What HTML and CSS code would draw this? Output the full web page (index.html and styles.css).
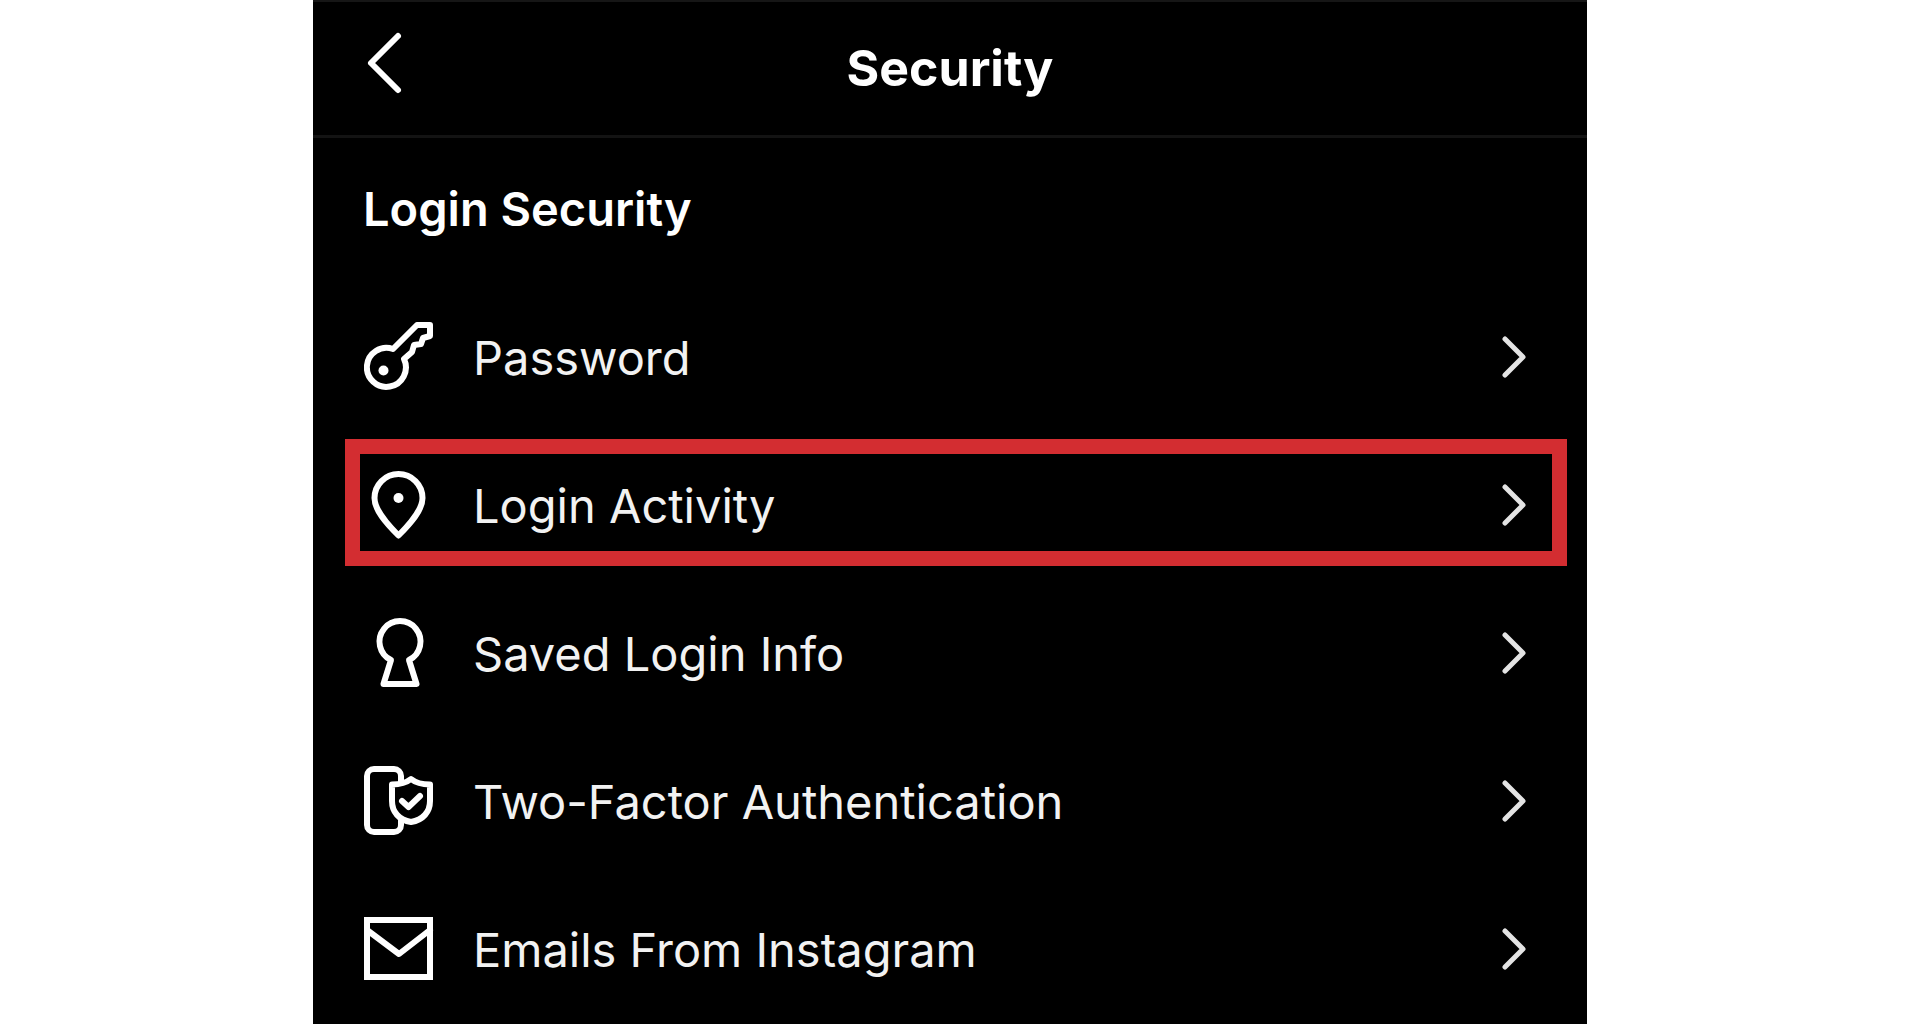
FILE: index.html
```html
<!DOCTYPE html>
<html lang="en">
<head>
    <meta charset="UTF-8">
    <meta name="viewport" content="width=device-width, initial-scale=1.0">
    <title>Security</title>
    <link rel="stylesheet" href="styles.css">
</head>
<body>
    <div class="panel">
        <header class="header">
            <button type="button" class="back" aria-label="Back">
                <svg width="40" height="68" viewBox="0 0 40 68"><path d="M34 7L7 34l27 27"/></svg>
            </button>
            <h1 class="title">Security</h1>
        </header>

        <main>
            <h2 class="section-title">Login Security</h2>
            <ul class="menu">
                <li>
                    <a href="#password" class="row">
                        <svg class="icon" viewBox="0 0 70 70">
                            <path d="M29 27L53 3h13v11l-7 2-2 6-7 1-2 7-8 7A19.5 19.5 0 1 1 29 27z"/>
                            <circle class="dot" cx="19.5" cy="48.5" r="5"/>
                        </svg>
                        <span class="label">Password</span>
                        <svg class="chevron" viewBox="0 0 24 42"><path d="M3 3l18 18L3 39"/></svg>
                    </a>
                </li>
                <li>
                    <a href="#activity" class="row highlighted">
                        <svg class="icon" viewBox="0 0 70 70">
                            <path d="M34.500 65.500C22 53 10.500 40 10.500 28a24 24 0 0 1 48 0c0 12-11.500 25-24 37.500z"/>
                            <circle class="dot" cx="34.500" cy="28" r="5"/>
                        </svg>
                        <span class="label">Login Activity</span>
                        <svg class="chevron" viewBox="0 0 24 42"><path d="M3 3l18 18L3 39"/></svg>
                    </a>
                </li>
                <li>
                    <a href="#saved" class="row">
                        <svg class="icon" viewBox="0 0 70 70">
                            <path d="M27 42A20.500 20.500 0 1 1 45 42L52.500 66h-33z"/>
                        </svg>
                        <span class="label">Saved Login Info</span>
                        <svg class="chevron" viewBox="0 0 24 42"><path d="M3 3l18 18L3 39"/></svg>
                    </a>
                </li>
                <li>
                    <a href="#two-factor" class="row">
                        <svg class="icon" viewBox="0 0 70 70">
                            <path d="M37 16v-6a7 7 0 0 0-7-7H10a7 7 0 0 0-7 7v49a7 7 0 0 0 7 7h20a7 7 0 0 0 7-7v-4"/>
                            <path d="M47 13c-5 4-11 5.500-19 5.500V35c0 11 7 19 19 21 12-2 19-10 19-21V18.500c-8 0-14-1.500-19-5.500z"/>
                            <path d="M38 35l6.500 6L56 30"/>
                        </svg>
                        <span class="label">Two-Factor Authentication</span>
                        <svg class="chevron" viewBox="0 0 24 42"><path d="M3 3l18 18L3 39"/></svg>
                    </a>
                </li>
                <li>
                    <a href="#emails" class="row">
                        <svg class="icon" viewBox="0 0 70 70">
                            <path class="square" d="M3 6h63v57H3z"/>
                            <path d="M3 16l32 24 31-24"/>
                        </svg>
                        <span class="label">Emails From Instagram</span>
                        <svg class="chevron" viewBox="0 0 24 42"><path d="M3 3l18 18L3 39"/></svg>
                    </a>
                </li>
            </ul>
        </main>
    </div>
</body>
</html>
```
FILE: styles.css
```css
* {
    box-sizing: border-box;
}
body {
    margin: 0;
    padding: 0 333px 0 313px;
    background-color: #fff;
    color: #fff;
    font-family: Inter, sans-serif;
}
.panel {
    min-height: 100vh;
    background-color: #000;
    border-top: 2px solid #161616;
}
.header {
    display: grid;
    grid-template-columns: 1fr auto 1fr;
    align-items: center;
    height: 136px;
    padding: 0 51px 2px;
    border-bottom: 3px solid #131313;
}
.back {
    justify-self: start;
    display: flex;
    padding: 0 0 9px;
    background: none;
    border: none;
    cursor: pointer;
}
svg {
    flex: none;
    fill: none;
    stroke: #fff;
    stroke-width: 6;
    stroke-linejoin: round;
    stroke-linecap: round;
}
.title {
    margin: 0;
    font-size: 50px;
    font-weight: 700;
}
.section-title {
    margin: 0;
    padding: 41px 50px 44px;
    font-size: 47px;
    line-height: 60px;
    font-weight: 600;
}
.menu {
    margin: 0;
    padding: 0;
    list-style: none;
}
.row {
    position: relative;
    display: flex;
    align-items: center;
    gap: 39px;
    height: 148px;
    padding: 0 61px 0 51px;
    color: #f2f2f2;
    font-size: 47px;
    text-decoration: none;
}
.highlighted::after {
    content: "";
    position: absolute;
    inset: 8px 20px 13px 32px;
    border: 15px solid #d32d31;
}
.icon {
    width: 70px;
    height: 70px;
}
.icon .dot {
    fill: #fff;
    stroke: none;
}
.icon .square {
    stroke-linejoin: miter;
}
.label {
    flex: 1;
}
.chevron {
    width: 24px;
    height: 42px;
    stroke: #e4e4e4;
    stroke-width: 5;
}
```
